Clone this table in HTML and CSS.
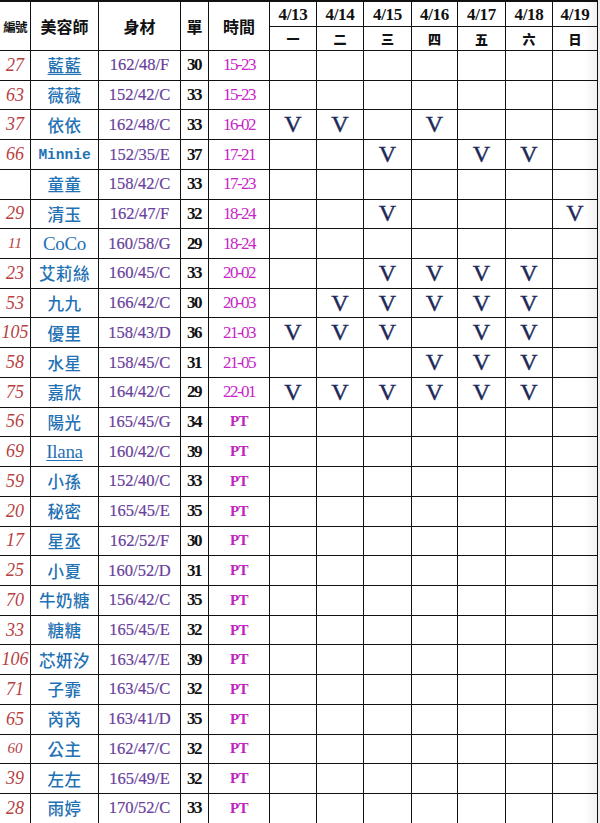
FILE: index.html
```html
<!DOCTYPE html>
<html lang="zh-Hant">
<head>
<meta charset="utf-8">
<title>班表</title>
<link rel="stylesheet" href="styles.css">
</head>
<body>
<div class="sheet">
  <div class="h hs">編號</div>
  <div class="h">美容師</div>
  <div class="h">身材</div>
  <div class="h">單</div>
  <div class="h">時間</div>
  <div class="d">4/13</div>
  <div class="d">4/14</div>
  <div class="d">4/15</div>
  <div class="d">4/16</div>
  <div class="d">4/17</div>
  <div class="d">4/18</div>
  <div class="d">4/19</div>
  <div class="w">一</div>
  <div class="w">二</div>
  <div class="w">三</div>
  <div class="w">四</div>
  <div class="w">五</div>
  <div class="w">六</div>
  <div class="w">日</div>

  <div class="no">27</div><div class="nm u">藍藍</div><div class="bd">162/48/F</div><div class="sz">30</div><div class="tm">15-23</div><div></div><div></div><div></div><div></div><div></div><div></div><div></div>
  <div class="no">63</div><div class="nm">薇薇</div><div class="bd">152/42/C</div><div class="sz">33</div><div class="tm">15-23</div><div></div><div></div><div></div><div></div><div></div><div></div><div></div>
  <div class="no">37</div><div class="nm">依依</div><div class="bd">162/48/C</div><div class="sz">33</div><div class="tm">16-02</div><div class="v">V</div><div class="v">V</div><div></div><div class="v">V</div><div></div><div></div><div></div>
  <div class="no">66</div><div class="nm mono">Minnie</div><div class="bd">152/35/E</div><div class="sz">37</div><div class="tm">17-21</div><div></div><div></div><div class="v">V</div><div></div><div class="v">V</div><div class="v">V</div><div></div>
  <div class="no"></div><div class="nm">童童</div><div class="bd">158/42/C</div><div class="sz">33</div><div class="tm">17-23</div><div></div><div></div><div></div><div></div><div></div><div></div><div></div>
  <div class="no">29</div><div class="nm">清玉</div><div class="bd">162/47/F</div><div class="sz">32</div><div class="tm">18-24</div><div></div><div></div><div class="v">V</div><div></div><div></div><div></div><div class="v">V</div>
  <div class="no sm">11</div><div class="nm lat">CoCo</div><div class="bd">160/58/G</div><div class="sz">29</div><div class="tm">18-24</div><div></div><div></div><div></div><div></div><div></div><div></div><div></div>
  <div class="no">23</div><div class="nm">艾莉絲</div><div class="bd">160/45/C</div><div class="sz">33</div><div class="tm">20-02</div><div></div><div></div><div class="v">V</div><div class="v">V</div><div class="v">V</div><div class="v">V</div><div></div>
  <div class="no">53</div><div class="nm">九九</div><div class="bd">166/42/C</div><div class="sz">30</div><div class="tm">20-03</div><div></div><div class="v">V</div><div class="v">V</div><div class="v">V</div><div class="v">V</div><div class="v">V</div><div></div>
  <div class="no">105</div><div class="nm">優里</div><div class="bd">158/43/D</div><div class="sz">36</div><div class="tm">21-03</div><div class="v">V</div><div class="v">V</div><div class="v">V</div><div></div><div class="v">V</div><div class="v">V</div><div></div>
  <div class="no">58</div><div class="nm">水星</div><div class="bd">158/45/C</div><div class="sz">31</div><div class="tm">21-05</div><div></div><div></div><div></div><div class="v">V</div><div class="v">V</div><div class="v">V</div><div></div>
  <div class="no">75</div><div class="nm">嘉欣</div><div class="bd">164/42/C</div><div class="sz">29</div><div class="tm">22-01</div><div class="v">V</div><div class="v">V</div><div class="v">V</div><div class="v">V</div><div class="v">V</div><div class="v">V</div><div></div>
  <div class="no">56</div><div class="nm">陽光</div><div class="bd">165/45/G</div><div class="sz">34</div><div class="pt">PT</div><div></div><div></div><div></div><div></div><div></div><div></div><div></div>
  <div class="no">69</div><div class="nm lat u">Ilana</div><div class="bd">160/42/C</div><div class="sz">39</div><div class="pt">PT</div><div></div><div></div><div></div><div></div><div></div><div></div><div></div>
  <div class="no">59</div><div class="nm">小孫</div><div class="bd">152/40/C</div><div class="sz">33</div><div class="pt">PT</div><div></div><div></div><div></div><div></div><div></div><div></div><div></div>
  <div class="no">20</div><div class="nm">秘密</div><div class="bd">165/45/E</div><div class="sz">35</div><div class="pt">PT</div><div></div><div></div><div></div><div></div><div></div><div></div><div></div>
  <div class="no">17</div><div class="nm">星丞</div><div class="bd">162/52/F</div><div class="sz">30</div><div class="pt">PT</div><div></div><div></div><div></div><div></div><div></div><div></div><div></div>
  <div class="no">25</div><div class="nm">小夏</div><div class="bd">160/52/D</div><div class="sz">31</div><div class="pt">PT</div><div></div><div></div><div></div><div></div><div></div><div></div><div></div>
  <div class="no">70</div><div class="nm">牛奶糖</div><div class="bd">156/42/C</div><div class="sz">35</div><div class="pt">PT</div><div></div><div></div><div></div><div></div><div></div><div></div><div></div>
  <div class="no">33</div><div class="nm">糖糖</div><div class="bd">165/45/E</div><div class="sz">32</div><div class="pt">PT</div><div></div><div></div><div></div><div></div><div></div><div></div><div></div>
  <div class="no">106</div><div class="nm">芯妍汐</div><div class="bd">163/47/E</div><div class="sz">39</div><div class="pt">PT</div><div></div><div></div><div></div><div></div><div></div><div></div><div></div>
  <div class="no">71</div><div class="nm">子霏</div><div class="bd">163/45/C</div><div class="sz">32</div><div class="pt">PT</div><div></div><div></div><div></div><div></div><div></div><div></div><div></div>
  <div class="no">65</div><div class="nm">芮芮</div><div class="bd">163/41/D</div><div class="sz">35</div><div class="pt">PT</div><div></div><div></div><div></div><div></div><div></div><div></div><div></div>
  <div class="no sm">60</div><div class="nm">公主</div><div class="bd">162/47/C</div><div class="sz">32</div><div class="pt">PT</div><div></div><div></div><div></div><div></div><div></div><div></div><div></div>
  <div class="no">39</div><div class="nm">左左</div><div class="bd">165/49/E</div><div class="sz">32</div><div class="pt">PT</div><div></div><div></div><div></div><div></div><div></div><div></div><div></div>
  <div class="no">28</div><div class="nm">雨婷</div><div class="bd">170/52/C</div><div class="sz">33</div><div class="pt">PT</div><div></div><div></div><div></div><div></div><div></div><div></div><div></div>
</div>
<div class="shade"></div>
</body>
</html>
```
FILE: styles.css
```css
html, body {
  margin: 0;
  padding: 0;
  background: #fff;
}
body {
  width: 600px;
  height: 823px;
  overflow: hidden;
  position: relative;
}
.sheet {
  display: grid;
  grid-template-columns: 30px 67px 81px 27px 60px 46px 46px 47px 45px 47px 46px 44px;
  grid-template-rows: 24px 23px repeat(26, 28.72px);
  gap: 1px;
  background: #111;
  padding: 2px 1px 0 0;
  width: max-content;
}
.sheet > div {
  background: #fff;
  display: flex;
  align-items: center;
  justify-content: center;
  white-space: nowrap;
  overflow: hidden;
}
.h {
  grid-row: span 2;
  font-family: "Noto Sans CJK TC", sans-serif;
  font-weight: 700;
  font-size: 16px;
  color: #111;
}
.hs {
  font-size: 12.5px;
  letter-spacing: -0.8px;
}
.d {
  font-family: "Liberation Serif", serif;
  font-weight: 700;
  font-size: 17px;
  letter-spacing: -0.3px;
  color: #111;
  padding-top: 1px;
}
.w {
  font-family: "Noto Sans CJK TC", sans-serif;
  font-weight: 900;
  font-size: 13px;
  color: #111;
}
.no {
  font-family: "Liberation Serif", serif;
  font-style: italic;
  font-size: 18px;
  color: #b8403f;
}
.no.sm {
  font-size: 15px;
}
.nm {
  font-family: "Noto Sans CJK TC", sans-serif;
  font-weight: 500;
  font-size: 16.5px;
  letter-spacing: 0.5px;
  color: #1f72b4;
}
.nm.mono {
  font-family: "Liberation Mono", monospace;
  font-weight: 700;
  font-size: 14.5px;
  letter-spacing: 0;
}
.nm.lat {
  font-family: "Liberation Serif", serif;
  font-weight: 400;
  font-size: 19px;
  letter-spacing: -0.3px;
}
.u {
  text-decoration: underline;
  text-underline-offset: 2px;
}
.bd {
  font-family: "Liberation Serif", serif;
  font-size: 16.5px;
  color: #6a3f9c;
  -webkit-text-stroke: 0.2px #6a3f9c;
}
.sz {
  font-family: "Liberation Serif", serif;
  font-weight: 700;
  font-size: 17px;
  letter-spacing: -1.5px;
  padding-right: 1px;
  color: #111;
}
.tm {
  font-family: "Liberation Serif", serif;
  font-size: 17px;
  letter-spacing: -1.5px;
  color: #c824c8;
}
.pt {
  font-family: "Liberation Serif", serif;
  font-weight: 700;
  font-size: 15px;
  letter-spacing: -0.5px;
  color: #c024c0;
}
.v {
  font-family: "Liberation Serif", serif;
  font-size: 24px;
  color: #1c2857;
  -webkit-text-stroke: 0.4px #1c2857;
}
.shade {
  position: absolute;
  top: 0;
  right: 0;
  width: 16px;
  height: 823px;
  background: linear-gradient(to right, rgba(0,0,0,0), rgba(0,0,0,0.07));
  pointer-events: none;
}
```
